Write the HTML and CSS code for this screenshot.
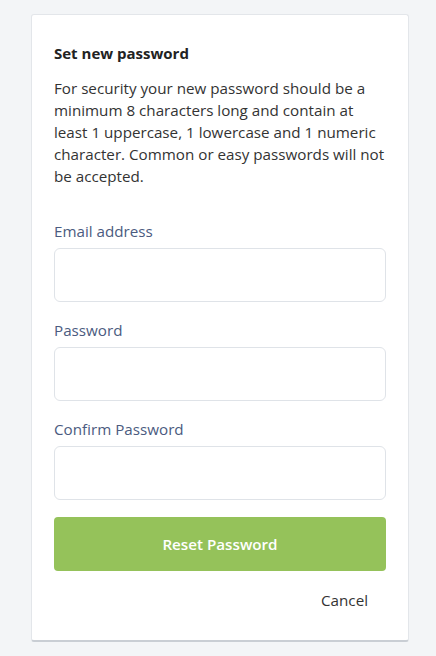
FILE: index.html
```html
<!DOCTYPE html>
<html>
<head>
<meta charset="utf-8">
<link rel="stylesheet" href="styles.css">
</head>
<body>
<div class="page">
  <div class="card">
    <h1 class="title">Set new password</h1>
    <p class="intro">For security your new password should be a minimum 8 characters long and contain at least 1 uppercase, 1 lowercase and 1 numeric character. Common or easy passwords will not be accepted.</p>
    <form class="form">
      <div class="field">
        <label class="label">Email address</label>
        <input class="input" type="email">
      </div>
      <div class="field">
        <label class="label">Password</label>
        <input class="input" type="password">
      </div>
      <div class="field">
        <label class="label">Confirm Password</label>
        <input class="input" type="password">
      </div>
      <button class="submit" type="button">Reset Password</button>
      <div class="actions"><a class="cancel">Cancel</a></div>
    </form>
  </div>
</div>
</body>
</html>
```
FILE: styles.css
```css
html, body {
  margin: 0;
  padding: 0;
  background: #f3f5f7;
  font-family: "Open Sans", "Liberation Sans", sans-serif;
  color: #333;
}
.page {
  padding: 14px 27px 0 31px;
}
.card {
  width: 378px;
  box-sizing: border-box;
  background: #fff;
  border: 1px solid #e3e6ea;
  border-bottom: 2px solid #c9ced4;
  border-radius: 3px;
  padding: 27px 22px 29px 22px;
}
.title {
  margin: 0;
  font-size: 15px;
  font-weight: 700;
  line-height: 22px;
  color: #222;
}
.intro {
  margin: 13px 0 0;
  font-size: 15.2px;
  line-height: 22px;
  color: #333;
}
.form {
  margin-top: 33px;
  display: flex;
  flex-direction: column;
}
.field {
  display: flex;
  flex-direction: column;
  margin-bottom: 17px;
}
.label {
  font-size: 15.2px;
  line-height: 22px;
  color: #4b5b80;
  margin-bottom: 6px;
}
.input {
  height: 54px;
  box-sizing: border-box;
  border: 1px solid #dfe3e8;
  border-radius: 6px;
  background: #fff;
  margin: 0;
  outline: none;
}
.submit {
  margin-top: 0;
  height: 54px;
  border: none;
  border-radius: 4px;
  background: #95c25a;
  color: #fff;
  font-family: inherit;
  font-size: 15.2px;
  font-weight: 600;
}
.actions {
  display: flex;
  justify-content: flex-end;
  padding-right: 18px;
  margin-top: 18px;
}
.cancel {
  font-size: 15.2px;
  line-height: 22px;
  color: #333;
}
```
